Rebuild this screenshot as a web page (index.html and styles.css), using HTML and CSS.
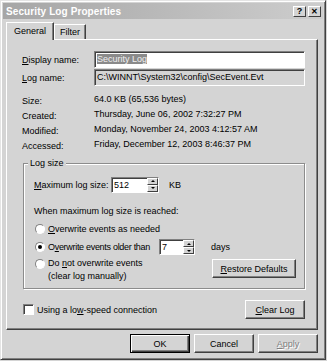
FILE: index.html
```html
<!DOCTYPE html>
<html lang="en">
  <head>
    <meta charset="UTF-8" />
    <title>Security Log Properties</title>
    <link rel="stylesheet" href="styles.css">
  </head>
  <body>
    <div class="window">
      <div class="titlebar">
        <span class="title">Security Log Properties</span>
        <span class="title-btns">
          <span class="tbtn">?</span>
          <span class="tbtn close">&#x2715;</span>
        </span>
      </div>

      <div class="content">
        <div class="tabs">
          <div class="tab active">General</div>
          <div class="tab">Filter</div>
        </div>

        <div class="panel">
          <div class="props">
            <div class="row">
              <span class="label"><u>D</u>isplay name:</span>
              <div class="edit"><span class="sel">Security Log</span></div>
            </div>
            <div class="row">
              <span class="label"><u>L</u>og name:</span>
              <div class="edit readonly">C:\WINNT\System32\config\SecEvent.Evt</div>
            </div>
            <div class="row info first">
              <span class="label">Size:</span>
              <span class="value">64.0 KB (65,536 bytes)</span>
            </div>
            <div class="row info">
              <span class="label">Created:</span>
              <span class="value">Thursday, June 06, 2002 7:32:27 PM</span>
            </div>
            <div class="row info">
              <span class="label">Modified:</span>
              <span class="value">Monday, November 24, 2003 4:12:57 AM</span>
            </div>
            <div class="row info">
              <span class="label">Accessed:</span>
              <span class="value">Friday, December 12, 2003 8:46:37 PM</span>
            </div>
          </div>

          <div class="group">
            <div class="group-title">Log size</div>
            <div class="size-row">
              <span class="size-label"><u>M</u>aximum log size:</span>
              <div class="spin wide">
                <span class="spin-text">512</span>
                <span class="spin-btns"><span class="arrow up"></span><span class="arrow down"></span></span>
              </div>
              <span class="unit">KB</span>
            </div>
            <div class="when">When maximum log size is reached:</div>
            <div class="radios">
              <div class="radio-row">
                <span class="radio"></span>
                <span><u>O</u>verwrite events as needed</span>
              </div>
              <div class="radio-row">
                <span class="radio checked"></span>
                <span class="older">O<u>v</u>erwrite events older than</span>
                <div class="spin narrow">
                  <span class="spin-text">7</span>
                  <span class="spin-btns"><span class="arrow up"></span><span class="arrow down"></span></span>
                </div>
                <span class="unit days">days</span>
              </div>
              <div class="radio-row last">
                <span class="radio"></span>
                <span class="two-line">Do <u>n</u>ot overwrite events<br>(clear log manually)</span>
                <button class="btn restore"><u>R</u>estore Defaults</button>
              </div>
            </div>
          </div>

          <div class="bottom-row">
            <span class="check"></span>
            <span class="check-label">Using a lo<u>w</u>-speed connection</span>
            <button class="btn clear"><u>C</u>lear Log</button>
          </div>
        </div>

        <div class="actions">
          <button class="btn default">OK</button>
          <button class="btn">Cancel</button>
          <button class="btn disabled"><u>A</u>pply</button>
        </div>
      </div>
    </div>
  </body>
</html>
```

FILE: styles.css
```css
body {
  margin: 0;
  padding: 0;
  background: #d4d4d4;
  font-family: "Liberation Sans", Arial, sans-serif;
  font-size: 9px;
  color: #000;
}
.window {
  width: 326px;
  height: 360px;
  box-sizing: border-box;
  background: #d4d4d4;
  border-top: 1px solid #e4e4e4;
  border-left: 1px solid #e4e4e4;
  border-right: 1px solid #404040;
  border-bottom: 1px solid #404040;
  box-shadow: inset 1px 1px 0 #fff, inset -1px -1px 0 #808080;
  padding: 2px;
  display: flex;
  flex-direction: column;
}
.titlebar {
  height: 16px;
  flex: none;
  display: flex;
  align-items: center;
  justify-content: space-between;
  padding: 0 2px 0 3px;
  background: linear-gradient(to right, #a6a6a6, #cdcdcd);
}
.title {
  color: #fff;
  font-weight: bold;
  font-size: 10px;
  letter-spacing: 0.1px;
}
.title-btns {
  display: flex;
  gap: 2px;
}
.tbtn {
  width: 13px;
  height: 11px;
  box-sizing: border-box;
  background: #d4d4d4;
  border-top: 1px solid #fff;
  border-left: 1px solid #fff;
  border-right: 1px solid #404040;
  border-bottom: 1px solid #404040;
  font-size: 9px;
  font-weight: bold;
  line-height: 9px;
  text-align: center;
}
.tbtn.close {
  font-size: 8px;
}
.content {
  flex: 1;
  display: flex;
  flex-direction: column;
  padding: 3px 5px 0 3px;
}
.tabs {
  display: flex;
  height: 17px;
  flex: none;
  align-items: flex-end;
  padding-left: 2px;
}
.tab {
  height: 15px;
  box-sizing: border-box;
  padding: 2px 5px 0;
  border-top: 1px solid #fff;
  border-left: 1px solid #fff;
  border-right: 1px solid #404040;
  box-shadow: inset -1px 0 0 #808080;
}
.tab.active {
  height: 18px;
  padding: 3px 7px 0;
  margin-left: -2px;
  margin-bottom: -1px;
  background: #d4d4d4;
  position: relative;
  z-index: 1;
}
.panel {
  height: 291px;
  flex: none;
  box-sizing: border-box;
  border-top: 1px solid #fff;
  border-left: 1px solid #fff;
  border-right: 1px solid #404040;
  border-bottom: 1px solid #404040;
  box-shadow: inset -1px -1px 0 #808080;
  padding: 11px 12px 0 15px;
  display: flex;
  flex-direction: column;
}
.props {
  display: flex;
  flex-direction: column;
}
.row {
  display: flex;
  align-items: center;
  height: 17px;
  margin-bottom: 1px;
}
.row.info {
  height: 15px;
  margin-bottom: 0;
}
.row.info.first {
  margin-top: 4px;
}
.label {
  width: 72px;
  flex: none;
}
.row.info .label {
  padding-top: 4px;
}
.edit {
  flex: 1;
  height: 17px;
  box-sizing: border-box;
  background: #fff;
  border-top: 1px solid #808080;
  border-left: 1px solid #808080;
  border-right: 1px solid #fff;
  border-bottom: 1px solid #fff;
  box-shadow: inset 1px 1px 0 #404040;
  padding: 2px 2px 0;
  white-space: nowrap;
}
.edit.readonly {
  background: #d4d4d4;
}
.sel {
  background: #8a8a8a;
  color: #f0f0f0;
}
.group {
  margin: 12px 0 0 1px;
  padding: 0 8px 4px 10px;
  border: 1px solid #8c8c8c;
  box-shadow: 1px 1px 0 #fff, inset 1px 1px 0 #fff;
}
.group-title {
  width: fit-content;
  line-height: 12px;
  margin: -7px 0 0 -6px;
  padding: 0 2px;
  background: #d4d4d4;
}
.size-row {
  display: flex;
  align-items: center;
  height: 17px;
  margin-top: 7px;
}
.size-label {
  width: 77px;
}
.spin {
  height: 16px;
  box-sizing: border-box;
  background: #fff;
  border-top: 1px solid #808080;
  border-left: 1px solid #808080;
  border-right: 1px solid #fff;
  border-bottom: 1px solid #fff;
  box-shadow: inset 1px 1px 0 #404040;
  display: flex;
  justify-content: space-between;
}
.spin.wide {
  width: 48px;
}
.spin.narrow {
  width: 36px;
}
.spin-text {
  padding: 2px 0 0 2px;
}
.spin-btns {
  width: 11px;
  display: flex;
  flex-direction: column;
}
.arrow {
  flex: 1;
  background: #d4d4d4;
  border-top: 1px solid #fff;
  border-left: 1px solid #fff;
  border-right: 1px solid #404040;
  border-bottom: 1px solid #404040;
  display: flex;
  align-items: center;
  justify-content: center;
}
.arrow.up::after {
  content: "";
  border-left: 2px solid transparent;
  border-right: 2px solid transparent;
  border-bottom: 2px solid #000;
}
.arrow.down::after {
  content: "";
  border-left: 2px solid transparent;
  border-right: 2px solid transparent;
  border-top: 2px solid #000;
}
.unit {
  margin-left: 10px;
}
.unit.days {
  margin-left: 16px;
}
.when {
  margin-top: 12px;
  line-height: 12px;
}
.radios {
  margin-top: 3px;
  display: flex;
  flex-direction: column;
}
.radio-row {
  display: flex;
  align-items: center;
  height: 18px;
  padding-left: 1px;
}
.older {
  width: 111px;
  flex: none;
  letter-spacing: -0.3px;
  white-space: nowrap;
}
.radio-row.last {
  align-items: flex-start;
  height: 28px;
  box-sizing: border-box;
  padding-top: 2px;
}
.radio {
  width: 10px;
  height: 10px;
  box-sizing: border-box;
  border-radius: 50%;
  border: 1px solid;
  border-color: #808080 #fff #fff #808080;
  background: #fff;
  margin-right: 3px;
  position: relative;
  flex: none;
}
.radio.checked::after {
  content: "";
  position: absolute;
  left: 2px;
  top: 2px;
  width: 4px;
  height: 4px;
  border-radius: 50%;
  background: #000;
}
.radio-row.last .radio {
  margin-top: 1px;
}
.two-line {
  line-height: 13px;
  margin-top: -1px;
}
.btn {
  font-family: "Liberation Sans", Arial, sans-serif;
  font-size: 9px;
  color: #000;
  background: #d4d4d4;
  height: 19px;
  box-sizing: border-box;
  padding: 0;
  border-top: 1px solid #fff;
  border-left: 1px solid #fff;
  border-right: 1px solid #404040;
  border-bottom: 1px solid #404040;
  box-shadow: inset -1px -1px 0 #808080;
}
.btn.restore {
  width: 84px;
  margin-left: auto;
  margin-top: 1px;
}
.bottom-row {
  display: flex;
  align-items: center;
  margin-top: 11px;
  padding-left: 1px;
}
.check {
  width: 11px;
  height: 11px;
  box-sizing: border-box;
  background: #fff;
  border-top: 1px solid #808080;
  border-left: 1px solid #808080;
  border-right: 1px solid #fff;
  border-bottom: 1px solid #fff;
  box-shadow: inset 1px 1px 0 #404040;
  margin-right: 3px;
}
.btn.clear {
  width: 60px;
  margin-left: auto;
}
.actions {
  display: flex;
  justify-content: flex-end;
  gap: 4px;
  margin-top: 4px;
}
.actions .btn {
  width: 60px;
}
.btn.default {
  border: 1px solid #000;
  box-shadow: inset 1px 1px 0 #fff, inset -1px -1px 0 #404040, inset -2px -2px 0 #808080;
}
.btn.disabled {
  color: #808080;
  text-shadow: 1px 1px 0 #fff;
}
```
